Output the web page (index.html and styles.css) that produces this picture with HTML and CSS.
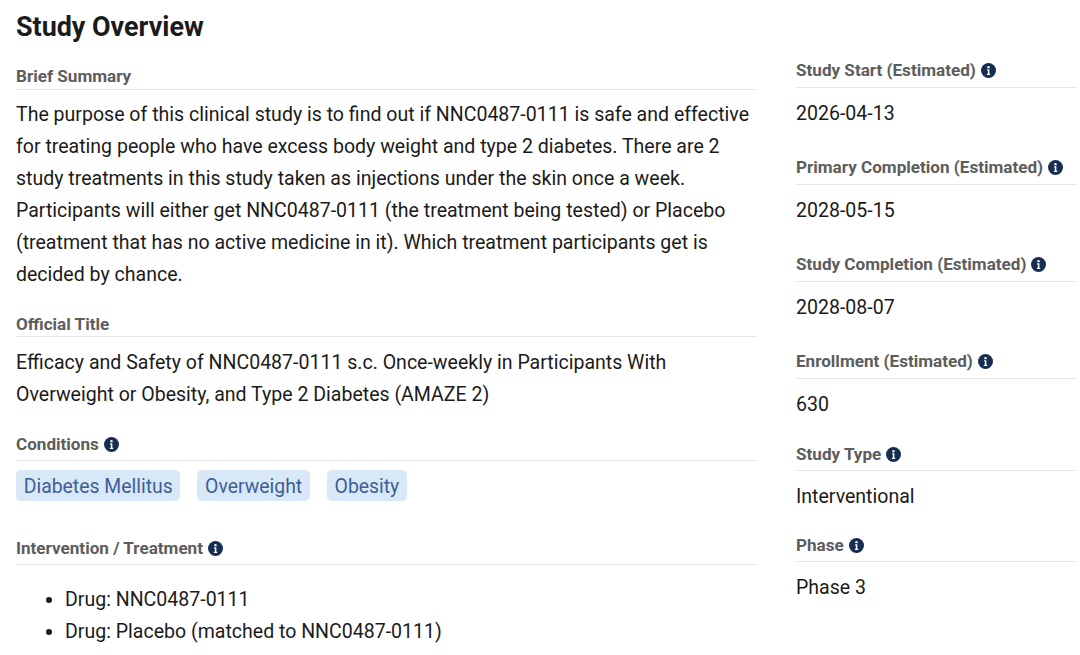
FILE: index.html
```html
<!DOCTYPE html>
<html lang="en">
<head>
<meta charset="utf-8">
<title>Study Overview</title>
<link rel="stylesheet" href="styles.css">
</head>
<body>
<svg class="defs" width="0" height="0" aria-hidden="true"><defs>
<symbol id="info" viewBox="0 0 14 14"><circle cx="7" cy="7" r="7" fill="#162e51"/><circle cx="7" cy="3.9" r="1.1" fill="#fff"/><path d="M5.7 5.9h2.1v4.2h.8v1H5.5v-1h.9V6.9h-.7z" fill="#fff"/></symbol>
</defs></svg>
<div class="page">
<main class="main">
<h1 class="title">Study Overview</h1>
<section class="summary">
<h2 class="label compact">Brief Summary</h2>
<p class="text">The purpose of this clinical study is to find out if NNC0487-0111 is safe and effective for treating people who have excess body weight and type 2 diabetes. There are 2 study treatments in this study taken as injections under the skin once a week. Participants will either get NNC0487-0111 (the treatment being tested) or Placebo (treatment that has no active medicine in it). Which treatment participants get is decided by chance.</p>
</section>
<section class="official">
<h2 class="label tightest">Official Title</h2>
<p class="text">Efficacy and Safety of NNC0487-0111 s.c. Once-weekly in Participants With Overweight or Obesity, and Type 2 Diabetes (AMAZE 2)</p>
</section>
<section class="conditions">
<h2 class="label">Conditions <svg class="icon"><use href="#info"/></svg></h2>
<div class="tags"><span class="tag">Diabetes Mellitus</span><span class="tag">Overweight</span><span class="tag">Obesity</span></div>
</section>
<section class="intervention">
<h2 class="label">Intervention / Treatment <svg class="icon"><use href="#info"/></svg></h2>
<ul class="list"><li>Drug: NNC0487-0111</li><li>Drug: Placebo (matched to NNC0487-0111)</li></ul>
</section>
</main>
<aside class="side">
<div class="fact"><h2 class="label roomy">Study Start (Estimated) <svg class="icon"><use href="#info"/></svg></h2><p class="value">2026-04-13</p></div>
<div class="fact"><h2 class="label roomy">Primary Completion (Estimated) <svg class="icon"><use href="#info"/></svg></h2><p class="value">2028-05-15</p></div>
<div class="fact"><h2 class="label roomy">Study Completion (Estimated) <svg class="icon"><use href="#info"/></svg></h2><p class="value">2028-08-07</p></div>
<div class="fact short"><h2 class="label roomy">Enrollment (Estimated) <svg class="icon"><use href="#info"/></svg></h2><p class="value">630</p></div>
<div class="fact shorter"><h2 class="label">Study Type <svg class="icon"><use href="#info"/></svg></h2><p class="value">Interventional</p></div>
<div class="fact"><h2 class="label">Phase <svg class="icon"><use href="#info"/></svg></h2><p class="value">Phase 3</p></div>
</aside>
</div>
</body>
</html>
```
FILE: styles.css
```css
* { box-sizing: border-box; }
html, body { margin: 0; padding: 0; background: #fff; }
body { font-family: Roboto, "Liberation Sans", sans-serif; color: #1b1b1b; overflow: hidden; height: 655px; }
.defs { position: absolute; }
.page { display: flex; gap: 39px; padding: 0 3px 0 16px; }
.main { width: 741px; flex: none; }
.side { flex: 1; padding-top: 60px; }
.title { margin: 0; font-size: 26.9px; font-weight: 700; line-height: 30px; padding-top: 12px; height: 42px; }
.label { margin: 0; font-size: 17.1px; font-weight: 700; line-height: 20px; padding-bottom: 6px; color: #5d5d5d; border-bottom: 1px solid #e6e6e6; display: flex; align-items: center; gap: 5px; }
.label.compact { padding-bottom: 3px; }
.label.tightest { padding-bottom: 2px; }
.label.roomy { padding-bottom: 7px; }
.icon { width: 15px; height: 15px; flex: none; }
.text { margin: 0; font-size: 19.55px; line-height: 32px; padding-top: 9px; }
.summary { padding-top: 24px; }
.official { padding-top: 23px; }
.official .text { padding-top: 10px; }
.conditions { padding-top: 23px; }
.tags { display: flex; gap: 17px; padding-top: 9px; }
.tag { background: #d9e8f6; color: #3d5f96; font-size: 19.4px; line-height: 29px; padding: 2px 7.7px 0; border-radius: 5px; }
.intervention { padding-top: 37px; }
.list { margin: 0; padding: 19px 0 0 49px; font-size: 19.55px; line-height: 32px; }
.fact { padding-bottom: 27px; }
.fact.short { padding-bottom: 23px; }
.fact.shorter { padding-bottom: 22px; }
.value { margin: 0; font-size: 19.55px; line-height: 32px; padding-top: 10px; }
```
